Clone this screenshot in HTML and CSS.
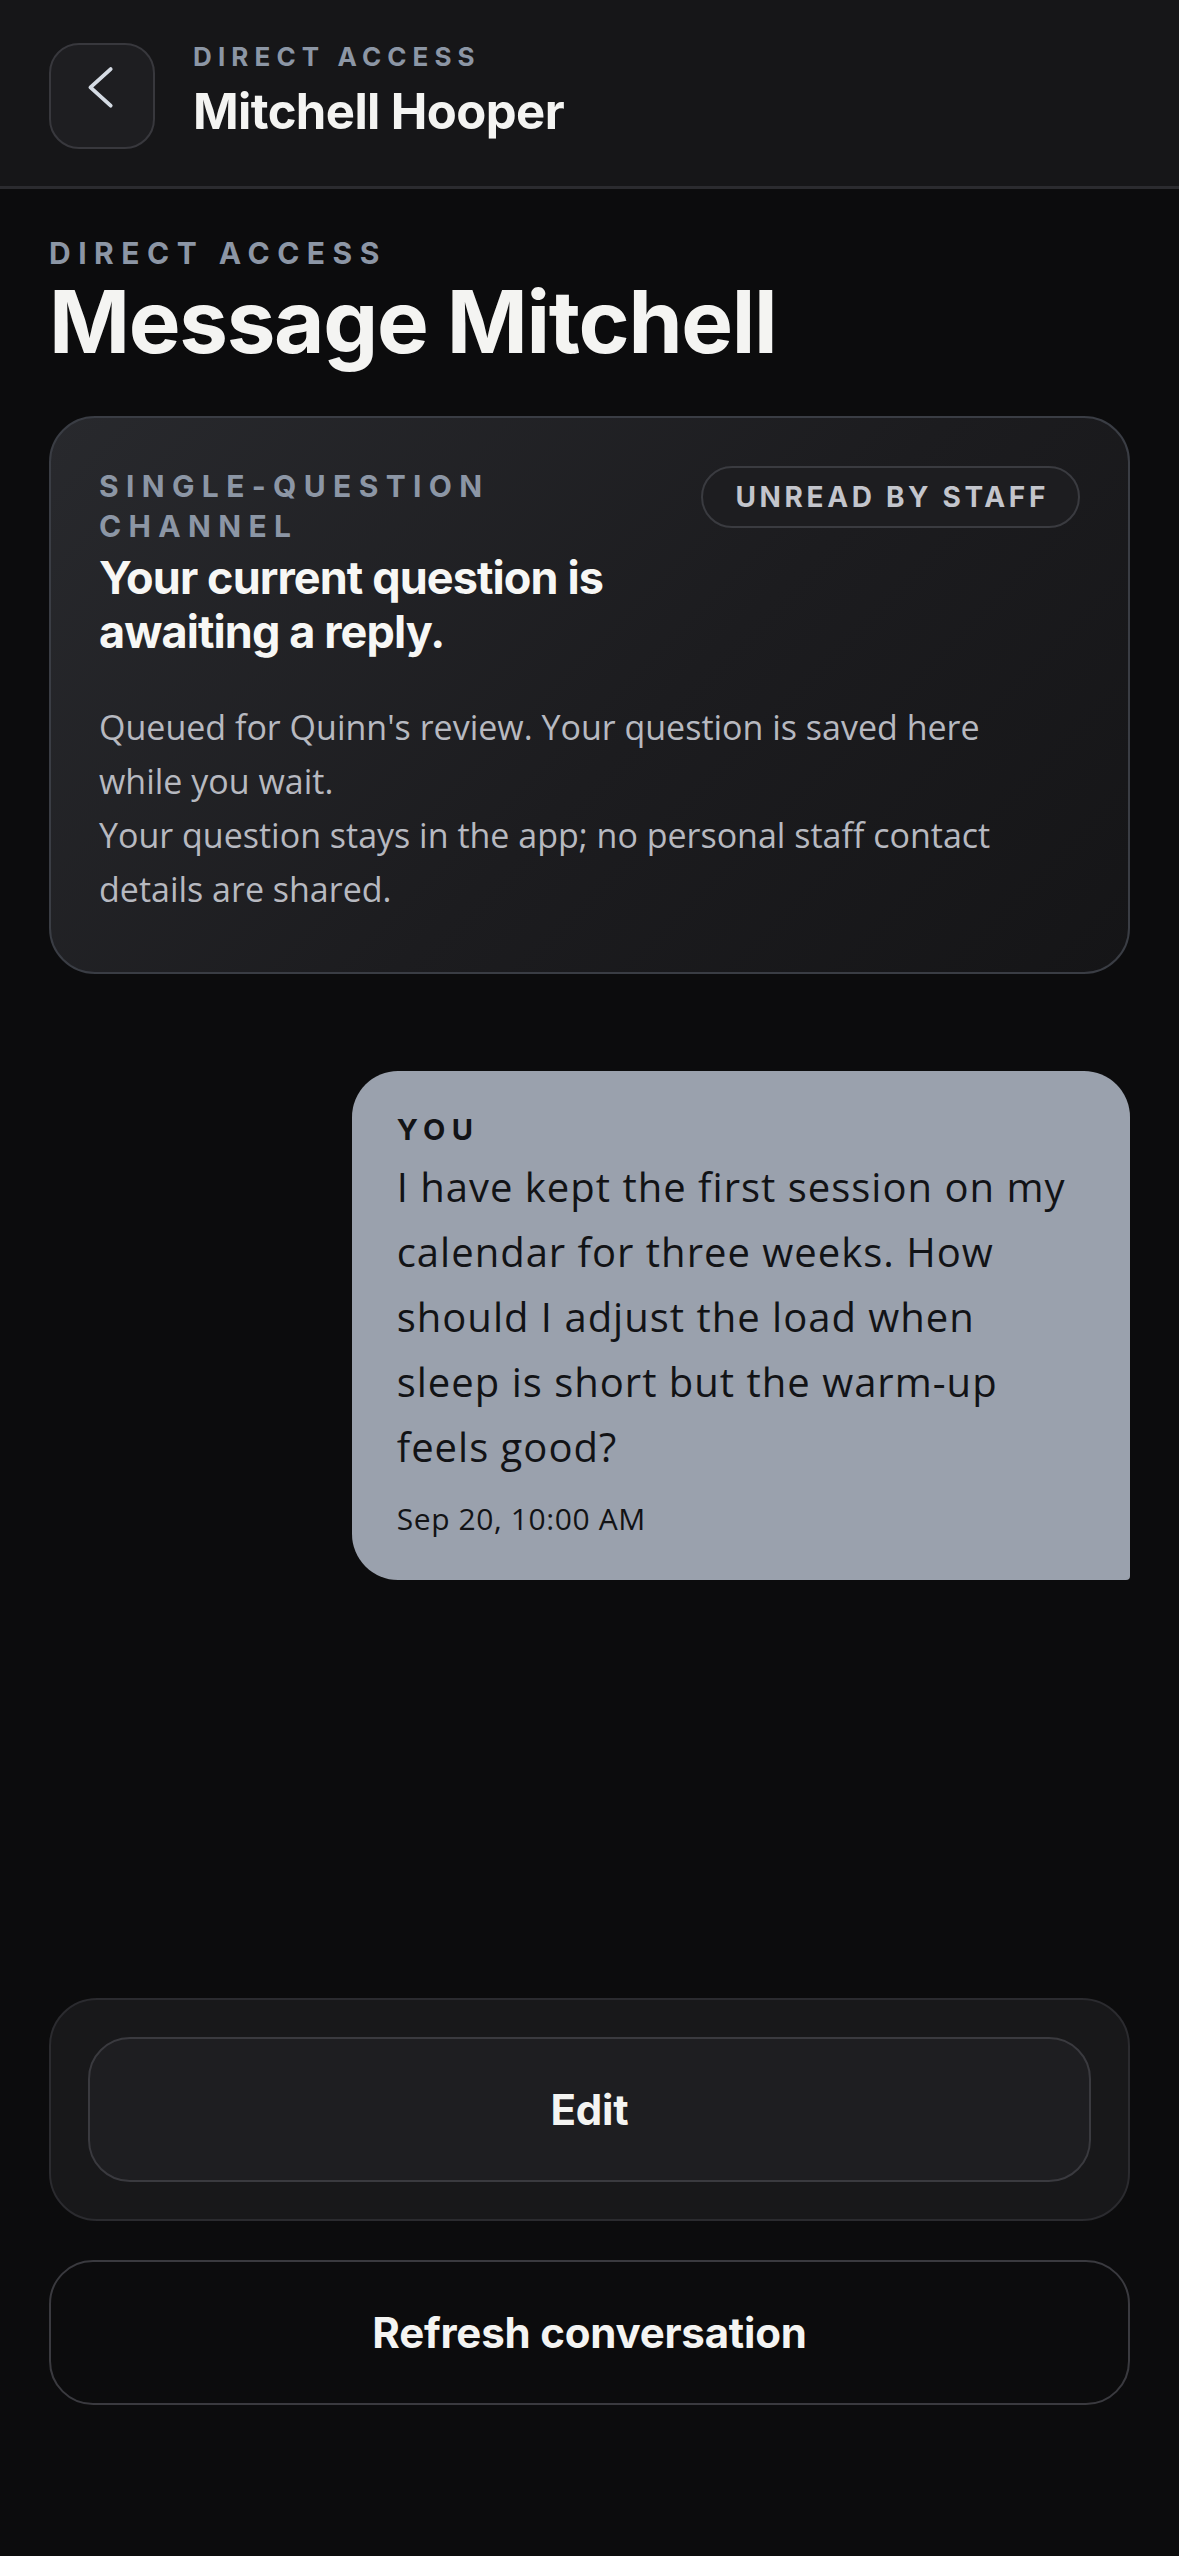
FILE: index.html
```html
<!DOCTYPE html>
<html lang="en">
<head>
<meta charset="utf-8">
<meta name="viewport" content="width=device-width, initial-scale=1">
<title>Message Mitchell</title>
<link rel="stylesheet" href="styles.css">
</head>
<body>
<div class="app">
  <header class="topbar">
    <button class="back-btn" aria-label="Back">
      <svg viewBox="0 0 106 106" width="106" height="106" aria-hidden="true">
        <polyline points="62,25 41,44 62,63" fill="none" stroke="#d5dbe4" stroke-width="4" stroke-linecap="round" stroke-linejoin="round"/>
      </svg>
    </button>
    <div class="topbar-titles">
      <div class="eyebrow eyebrow-sm">DIRECT ACCESS</div>
      <div class="topbar-name">Mitchell Hooper</div>
    </div>
  </header>

  <main class="content">
    <div class="eyebrow eyebrow-lg">DIRECT ACCESS</div>
    <h1 class="page-title">Message Mitchell</h1>

    <section class="status-card">
      <div class="status-top">
        <div class="status-head">
          <div class="eyebrow eyebrow-card">SINGLE-QUESTION CHANNEL</div>
          <h2 class="status-title">Your current question is awaiting a reply.</h2>
        </div>
        <span class="pill">UNREAD BY STAFF</span>
      </div>
      <p class="status-body">Queued for Quinn's review. Your question is saved here while you wait.</p>
      <p class="status-body">Your question stays in the app; no personal staff contact details are shared.</p>
    </section>

    <div class="thread">
      <div class="bubble">
        <div class="bubble-author">YOU</div>
        <p class="bubble-text">I have kept the first session on my calendar for three weeks. How should I adjust the load when sleep is short but the warm-up feels good?</p>
        <div class="bubble-time">Sep 20, 10:00 AM</div>
      </div>
    </div>
  </main>

  <footer class="actions">
    <div class="composer">
      <button class="btn btn-edit">Edit</button>
    </div>
    <button class="btn btn-refresh">Refresh conversation</button>
  </footer>
</div>
</body>
</html>
```

FILE: styles.css
```css
* { box-sizing: border-box; }

html, body {
  margin: 0;
  padding: 0;
  background: #0c0c0d;
}

body {
  font-family: "Open Sans", "Noto Sans", sans-serif;
  color: #f4f4f2;
}

.app {
  min-height: 100vh;
  display: flex;
  flex-direction: column;
}

/* Top bar */
.topbar {
  display: flex;
  align-items: flex-start;
  gap: 38px;
  padding: 43px 49px 37px;
  background: #161618;
  border-bottom: 3px solid #2b2b2f;
}

.back-btn {
  width: 106px;
  height: 106px;
  flex: none;
  padding: 0;
  border: 2px solid #38383d;
  border-radius: 30px;
  background: #1e1e21;
  display: flex;
  align-items: center;
  justify-content: center;
}

.back-btn svg { display: block; width: 102px; height: 102px; }

.topbar-titles {
  display: flex;
  flex-direction: column;
  gap: 12px;
  margin-top: -1px;
}

.eyebrow {
  font-family: "Inter", "Roboto", "Liberation Sans", sans-serif;
  font-weight: 700;
  color: #8c96a5;
  text-transform: uppercase;
}

.eyebrow-sm {
  font-size: 26px;
  line-height: 30px;
  letter-spacing: 0.235em;
}

.topbar-name {
  font-family: "Inter", "Roboto", "Liberation Sans", sans-serif;
  font-weight: 700;
  font-size: 49px;
  line-height: 56px;
  letter-spacing: -0.012em;
  color: #f4f4f2;
}

/* Main */
.content {
  flex: 1;
  display: flex;
  flex-direction: column;
  padding: 47px 49px 0;
}

.eyebrow-lg {
  font-size: 30px;
  line-height: 34px;
  letter-spacing: 0.25em;
}

.page-title {
  margin: 6px 0 48px;
  font-family: "Inter", "Roboto", "Liberation Sans", sans-serif;
  font-weight: 700;
  font-size: 87px;
  line-height: 92px;
  letter-spacing: -0.015em;
  color: #f4f4f2;
}

/* Status card */
.status-card {
  border: 2px solid #3a3d44;
  border-radius: 46px;
  background: linear-gradient(135deg, #28292d 0%, #1c1c1f 55%, #151517 100%);
  padding: 48px 48px 56px;
}

.status-top {
  display: flex;
  align-items: flex-start;
  gap: 24px;
}

.status-head {
  flex: 1;
  min-width: 0;
}

.eyebrow-card {
  font-size: 30px;
  line-height: 40px;
  letter-spacing: 0.245em;
}

.status-title {
  margin: 5px 0 0;
  font-family: "Inter", "Roboto", "Liberation Sans", sans-serif;
  font-weight: 700;
  font-size: 45px;
  line-height: 54px;
  letter-spacing: -0.02em;
  color: #f7f7f5;
}

.pill {
  flex: none;
  height: 62px;
  padding: 0 29px 0 32px;
  border: 2px solid #3a3b40;
  border-radius: 31px;
  background: #1d1d20;
  display: flex;
  align-items: center;
  font-family: "Inter", "Roboto", "Liberation Sans", sans-serif;
  font-weight: 700;
  font-size: 28px;
  letter-spacing: 0.13em;
  color: #c3c5cc;
  white-space: nowrap;
}

.status-body {
  margin: 0;
  max-width: 950px;
  font-size: 34px;
  font-weight: 400;
  line-height: 54px;
  color: #b7b9c0;
}

.status-top + .status-body { margin-top: 41px; }

/* Thread */
.thread {
  display: flex;
  justify-content: flex-end;
  padding-top: 97px;
}

.bubble {
  width: 72%;
  background: #9aa1ad;
  color: #121316;
  border-radius: 46px 46px 4px 46px;
  padding: 42px 52px 43px 45px;
}

.bubble-author {
  font-family: "Inter", "Roboto", "Liberation Sans", sans-serif;
  font-weight: 700;
  font-size: 29px;
  line-height: 34px;
  letter-spacing: 0.22em;
}

.bubble-text {
  margin: 7px 0 0;
  font-size: 40px;
  font-weight: 400;
  line-height: 65px;
  letter-spacing: 0.025em;
}

.bubble-time {
  margin-top: 22px;
  font-size: 30px;
  font-weight: 400;
  line-height: 36px;
  letter-spacing: 0.02em;
}

/* Footer actions */
.actions {
  display: flex;
  flex-direction: column;
  gap: 39px;
  padding: 0 49px 151px;
}

.composer {
  border: 2px solid #2b2b2f;
  border-radius: 48px;
  background: #18181a;
  padding: 37px;
}

.btn {
  display: flex;
  align-items: center;
  justify-content: center;
  width: 100%;
  height: 145px;
  border: 2px solid #3a3a3f;
  border-radius: 44px;
  font-family: "Inter", "Roboto", "Liberation Sans", sans-serif;
  font-weight: 700;
  font-size: 42px;
  letter-spacing: -0.005em;
  color: #f4f4f2;
}

.btn-edit {
  background: #1e1e21;
  border-radius: 42px;
}

.btn-refresh {
  background: transparent;
}
```
